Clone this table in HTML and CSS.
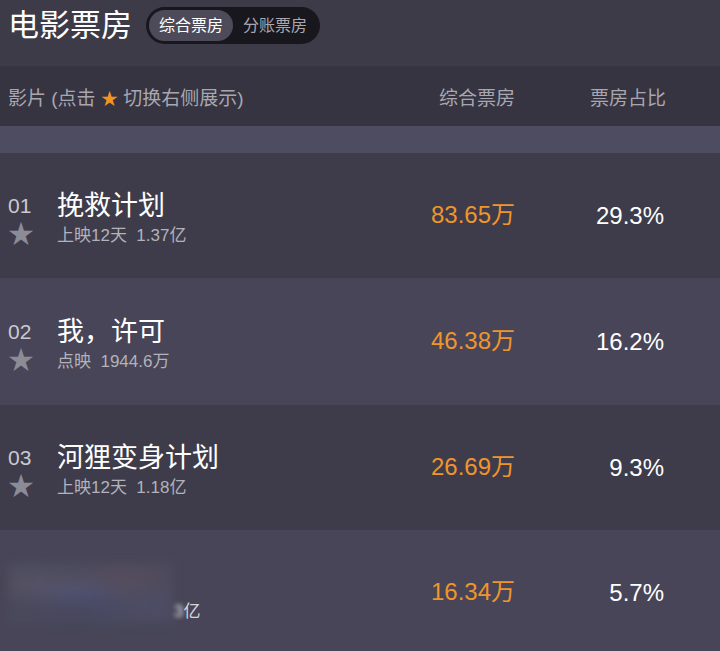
FILE: index.html
```html
<!DOCTYPE html>
<html lang="zh-CN">
<head>
    <meta charset="UTF-8">
    <meta name="viewport" content="width=device-width, initial-scale=1.0">
    <title>电影票房</title>
    <link rel="stylesheet" href="styles.css">
</head>
<body>
    <!-- 顶部标题 -->
    <div class="top-bar">
        <h1>电影票房</h1>
        <div class="toggle">
            <span class="toggle-item active">综合票房</span>
            <span class="toggle-item">分账票房</span>
        </div>
    </div>

    <!-- 表头 -->
    <div class="table-head">
        <div class="col-name">影片 (点击 <span class="head-star">★</span> 切换右侧展示)</div>
        <div class="col-num">综合票房</div>
        <div class="col-num">票房占比</div>
    </div>
    <div class="band"></div>

    <!-- 列表 -->
    <div class="list">
        <div class="row">
            <div class="movie">
                <div class="rank">
                    <div class="rank-no">01</div>
                    <div class="star">★</div>
                </div>
                <div class="info">
                    <div class="title">挽救计划</div>
                    <div class="sub">上映12天&nbsp;&nbsp;1.37亿</div>
                </div>
            </div>
            <div class="box">83.65万</div>
            <div class="share">29.3%</div>
        </div>

        <div class="row alt">
            <div class="movie">
                <div class="rank">
                    <div class="rank-no">02</div>
                    <div class="star">★</div>
                </div>
                <div class="info">
                    <div class="title">我，许可</div>
                    <div class="sub">点映&nbsp;&nbsp;1944.6万</div>
                </div>
            </div>
            <div class="box">46.38万</div>
            <div class="share">16.2%</div>
        </div>

        <div class="row">
            <div class="movie">
                <div class="rank">
                    <div class="rank-no">03</div>
                    <div class="star">★</div>
                </div>
                <div class="info">
                    <div class="title">河狸变身计划</div>
                    <div class="sub">上映12天&nbsp;&nbsp;1.18亿</div>
                </div>
            </div>
            <div class="box">26.69万</div>
            <div class="share">9.3%</div>
        </div>

        <div class="row alt">
            <div class="movie hidden-movie">
                <div class="mosaic"></div>
                <div class="sub tail"><span class="blur-digit">3</span>亿</div>
            </div>
            <div class="box">16.34万</div>
            <div class="share">5.7%</div>
        </div>
    </div>
</body>
</html>
```

FILE: styles.css
```css
body {
    margin: 0;
    background: #3e3c4b;
    font-family: 'Liberation Sans', 'Noto Sans CJK SC', sans-serif;
    color: #fff;
    overflow: hidden;
}

.top-bar {
    height: 66px;
    box-sizing: border-box;
    padding: 7px 8px 0;
    display: flex;
    align-items: flex-start;
    gap: 14px;
    background: #3d3b48;
}

.top-bar h1 {
    margin: 0;
    font-size: 31px;
    font-weight: normal;
    line-height: 37px;
    color: #fff;
}

.toggle {
    display: flex;
    padding: 3px;
    border-radius: 19px;
    background: #18171d;
}

.toggle-item {
    padding: 0 10px;
    font-size: 16px;
    line-height: 31px;
    border-radius: 16px;
    color: #a9a8b0;
}

.toggle-item.active {
    background: #4d4b59;
    color: #fff;
}

.table-head {
    height: 60px;
    display: grid;
    grid-template-columns: 1fr 130px 151px;
    align-items: center;
    padding: 0 54px 0 8px;
    background: #363441;
    font-size: 19px;
    color: #a8a7b0;
}

.col-num {
    text-align: right;
}

.head-star {
    color: #f39322;
    font-size: 17px;
}

.band {
    height: 27px;
    background: #4e4c60;
}

.row {
    height: 125px;
    display: grid;
    grid-template-columns: 1fr 130px 149px;
    align-items: center;
    padding: 0 56px 0 8px;
    background: #3e3c4b;
}

.row.alt {
    background: #474557;
}

.row:nth-child(2) {
    height: 127px;
}

.movie {
    display: flex;
    padding-top: 6px;
}

.rank {
    width: 49px;
}

.rank-no {
    font-size: 21px;
    line-height: 32px;
    color: #cac9d1;
}

.star {
    font-size: 26px;
    line-height: 24px;
    color: #8c8b96;
}

.title {
    font-size: 27px;
    line-height: 32px;
    color: #fff;
}

.sub {
    margin-top: 3px;
    font-size: 17px;
    line-height: 22px;
    color: #b3b2ba;
}

.box {
    text-align: right;
    font-size: 24px;
    color: #f0952a;
    margin-bottom: 6px;
}

.share {
    text-align: right;
    font-size: 24px;
    color: #fff;
}

.hidden-movie {
    align-items: flex-end;
    padding-top: 0;
}

.mosaic {
    width: 166px;
    height: 64px;
    background:
        radial-gradient(ellipse at 15% 35%, rgba(110, 100, 115, 0.35), transparent 40%),
        radial-gradient(ellipse at 40% 50%, rgba(75, 90, 140, 0.4), transparent 40%),
        radial-gradient(ellipse at 70% 30%, rgba(115, 90, 100, 0.3), transparent 40%),
        radial-gradient(ellipse at 85% 70%, rgba(80, 85, 120, 0.35), transparent 40%),
        radial-gradient(ellipse at 50% 85%, rgba(65, 70, 100, 0.35), transparent 45%),
        rgba(85, 85, 108, 0.25);
    filter: blur(5px);
}

.tail {
    margin: 0 0 2px 0;
    color: #d6d5dc;
}

.blur-digit {
    filter: blur(2px);
    color: #e4e3ea;
}
```
